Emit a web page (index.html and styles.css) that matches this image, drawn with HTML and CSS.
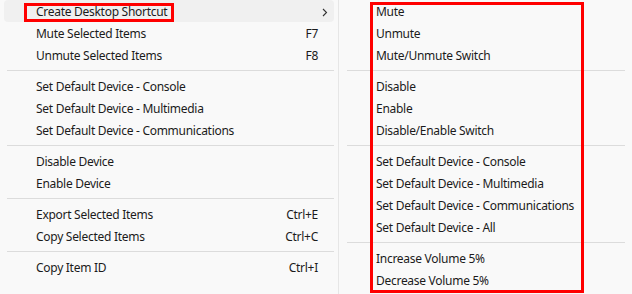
FILE: index.html
```html
<!DOCTYPE html>
<html lang="en">
<head>
	<meta charset="UTF-8">
	<title>Context menu</title>
	<link rel="stylesheet" href="styles.css">
</head>
<body>
	<section class="screen">
		<section class="menu main">
			<div class="item hover">
				<span class="label">Create Desktop Shortcut</span>
				<span class="arrow"><svg width="6" height="9" viewBox="0 0 6 9"><path d="M1 1 L4.5 4.5 L1 8" fill="none" stroke="#333" stroke-width="1.1"/></svg></span>
			</div>
			<div class="item"><span class="label">Mute Selected Items</span><span class="key">F7</span></div>
			<div class="item"><span class="label">Unmute Selected Items</span><span class="key">F8</span></div>
			<div class="sep"></div>
			<div class="item"><span class="label">Set Default Device - Console</span></div>
			<div class="item"><span class="label">Set Default Device - Multimedia</span></div>
			<div class="item"><span class="label">Set Default Device - Communications</span></div>
			<div class="sep"></div>
			<div class="item"><span class="label">Disable Device</span></div>
			<div class="item"><span class="label">Enable Device</span></div>
			<div class="sep"></div>
			<div class="item"><span class="label">Export Selected Items</span><span class="key">Ctrl+E</span></div>
			<div class="item"><span class="label">Copy Selected Items</span><span class="key">Ctrl+C</span></div>
			<div class="sep"></div>
			<div class="item"><span class="label">Copy Item ID</span><span class="key">Ctrl+I</span></div>
		</section>
		<section class="menu sub">
			<div class="item"><span class="label">Mute</span></div>
			<div class="item"><span class="label">Unmute</span></div>
			<div class="item"><span class="label">Mute/Unmute Switch</span></div>
			<div class="sep"></div>
			<div class="item"><span class="label">Disable</span></div>
			<div class="item"><span class="label">Enable</span></div>
			<div class="item"><span class="label">Disable/Enable Switch</span></div>
			<div class="sep"></div>
			<div class="item"><span class="label">Set Default Device - Console</span></div>
			<div class="item"><span class="label">Set Default Device - Multimedia</span></div>
			<div class="item"><span class="label">Set Default Device - Communications</span></div>
			<div class="item"><span class="label">Set Default Device - All</span></div>
			<div class="sep"></div>
			<div class="item"><span class="label">Increase Volume 5%</span></div>
			<div class="item"><span class="label">Decrease Volume 5%</span></div>
		</section>
		<div class="mark mark_item"></div>
		<div class="mark mark_sub"></div>
	</section>
</body>
</html>
```
FILE: styles.css
```css
*{margin:0;padding:0;box-sizing:border-box}
html,body{background:#f9f9f9}
body{
	font-family:"Noto Sans","Open Sans",sans-serif;
	font-size:12px;
	letter-spacing:-0.28px;
	color:#1b1b1b;
}
.screen{
	position:relative;
	display:flex;
	width:632px;
	height:294px;
	overflow:hidden;
}
.menu{
	background:#f9f9f9;
}
.main{
	width:339px;
	border-right:1px solid #e6e6e6;
}
.sub{
	flex:1;
}
.item{
	display:flex;
	align-items:center;
	height:22px;
	margin:0 4px;
	padding:1px 16px 0 32px;
	border-radius:4px;
	white-space:nowrap;
}
.sub .item{
	padding-left:33px;
}
.item.hover{
	background:#f0f0f0;
}
.item .label{
	flex:1;
}
.item .arrow{
	display:flex;
	margin-right:-10px;
	padding-top:1px;
}
.sep{
	height:1px;
	margin:4px 4px 4px 7px;
	background:#dcdcdc;
}
.sub .sep{
	margin:4px 7px 4px 8px;
}
/* red annotation frames */
.mark{
	position:absolute;
	border:3px solid #ff0000;
}
.mark_item{
	left:24px;
	top:3px;
	width:150px;
	height:19px;
}
.mark_sub{
	left:370px;
	top:2px;
	width:214px;
	height:291px;
}
```
